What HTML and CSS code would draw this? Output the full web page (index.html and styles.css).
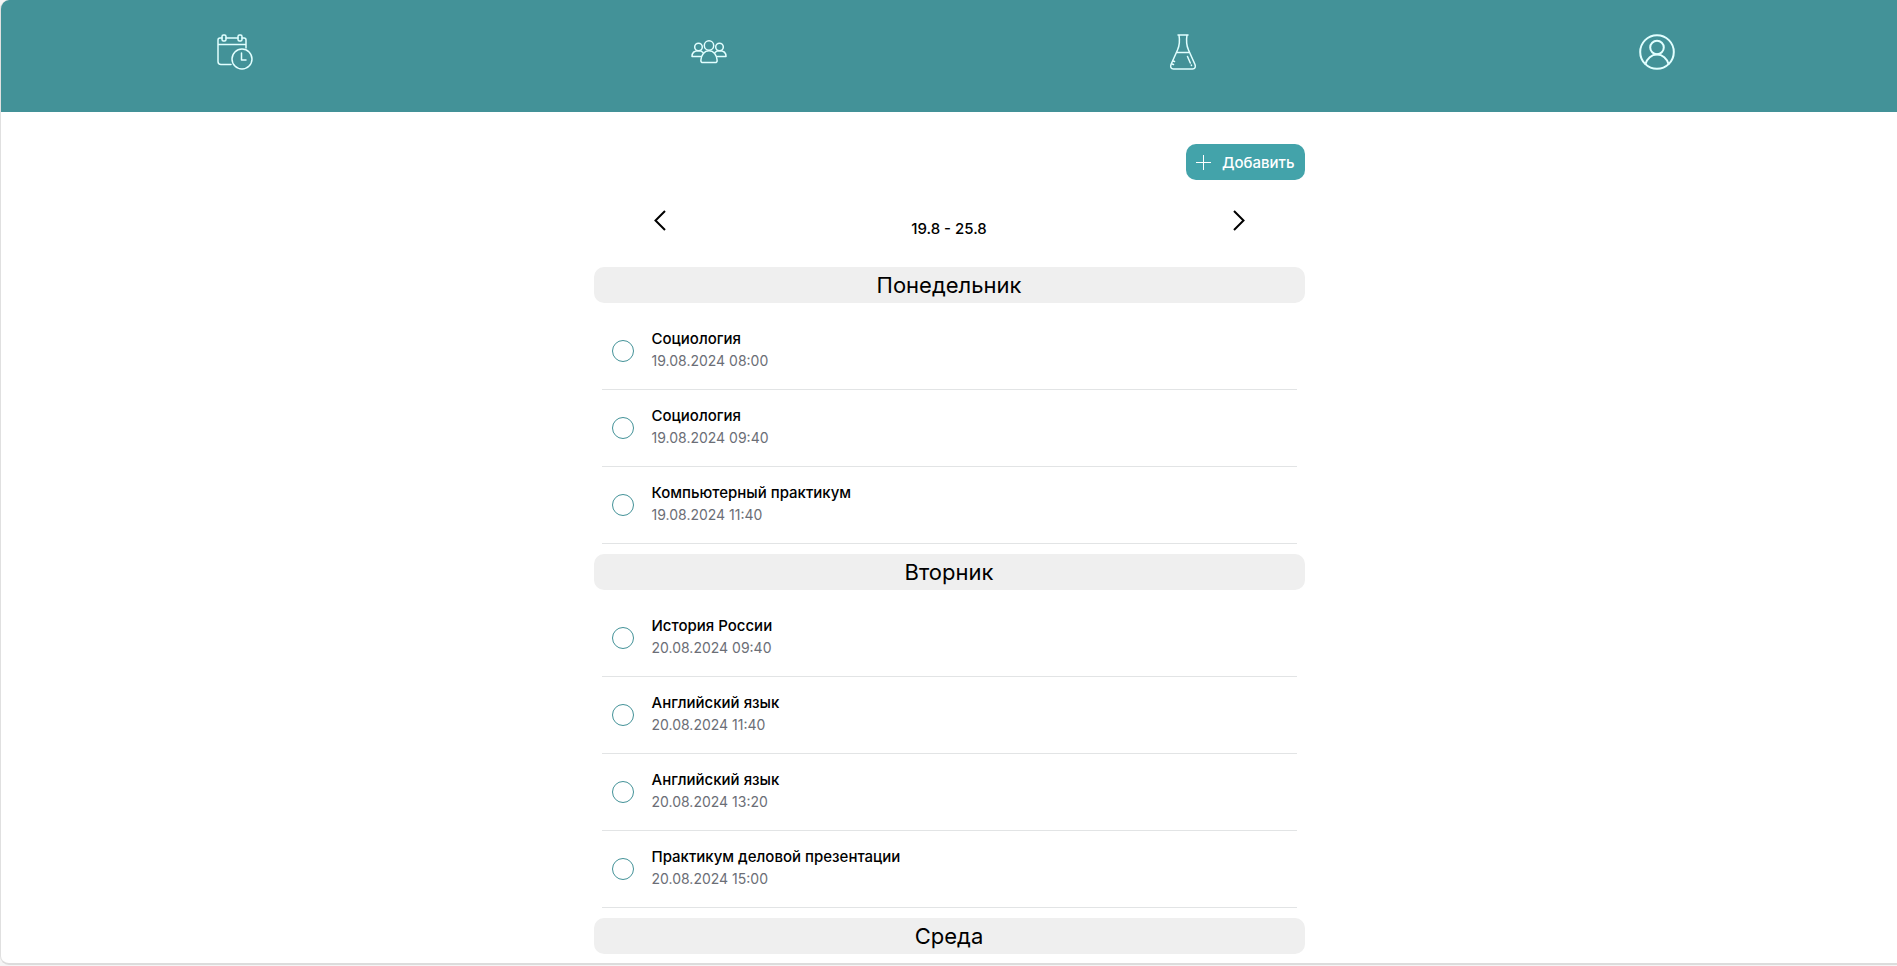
FILE: index.html
```html
<!DOCTYPE html>
<html lang="ru">
<head>
    <meta charset="UTF-8">
    <meta name="viewport" content="width=device-width, initial-scale=1.0">
    <title>Расписание</title>
    <link rel="stylesheet" href="styles.css">
</head>
<body>
    <div class="app">
        <nav class="navbar">
            <a class="nav-link" href="#schedule" aria-label="Расписание">
                <svg class="nav-icon" viewBox="0 0 36 36">
                    <path d="M14 30.500H4a3 3 0 0 1-3-3V6a2 2 0 0 1 2-2h2M9 4h12M25 4h2a2 2 0 0 1 2 2v8M1 10.500h28"/>
                    <rect x="5" y="1" width="4" height="6" rx="1.500"/>
                    <rect x="21" y="1" width="4" height="6" rx="1.500"/>
                    <circle cx="25" cy="25" r="10"/>
                    <path d="M24.500 19v7H29"/>
                </svg>
            </a>
            <a class="nav-link" href="#groups" aria-label="Группы">
                <svg class="nav-icon" viewBox="0 0 36 36">
                    <circle cx="18" cy="11.500" r="4.700"/>
                    <circle cx="7.500" cy="13" r="3.800"/>
                    <circle cx="28.500" cy="13" r="3.800"/>
                    <path d="M12 28.500c-1.500 0-2.300-.8-2.100-2.500.4-5.200 3.400-9.300 8.100-9.300s7.700 4.100 8.100 9.300c.2 1.700-.6 2.500-2.100 2.500z"/>
                    <path d="M9.500 22.500H1c0-3 2-5.700 6.500-5.700 2 0 3.500.6 4.500 1.700M26.500 22.500H35c0-3-2-5.700-6.500-5.700-2 0-3.500.6-4.500 1.700"/>
                </svg>
            </a>
            <a class="nav-link" href="#labs" aria-label="Лабораторные">
                <svg class="nav-icon" viewBox="0 0 36 36">
                    <path d="M13 1h10M14 1c.8 5 .8 10-1.500 15L6 30.500c-1 2.500 0 4.500 2.500 4.500h19c2.500 0 3.500-2 2.500-4.500L23.500 16C21.200 11 21.200 6 22 1M12 18.500h12"/>
                    <path d="M22.500 22.500l2.800 6.500M26.300 31l.2.500M8 27l1.500.5M7 30l1.500.5"/>
                </svg>
            </a>
            <a class="nav-link" href="#profile" aria-label="Профиль">
                <svg class="nav-icon nav-icon-bold" viewBox="0 0 36 36">
                    <circle cx="18" cy="18" r="16.800"/>
                    <circle cx="18" cy="13.500" r="6.800"/>
                    <path d="M6.500 30c1.500-5.500 6-9.500 11.500-9.500S28 24.500 29.500 30"/>
                </svg>
            </a>
        </nav>

        <main class="schedule">
            <div class="toolbar">
                <button class="add-btn" type="button">
                    <svg class="add-icon" viewBox="0 0 15 15"><path d="M7.500 0v15M0 7.500h15"/></svg>
                    Добавить
                </button>
            </div>

            <div class="week">
                <button class="week-btn" type="button" aria-label="Предыдущая неделя">
                    <svg class="week-icon" viewBox="0 0 36 36"><path d="M23 9l-9.500 9.500L23 28"/></svg>
                </button>
                <span class="week-range">19.8 - 25.8</span>
                <button class="week-btn" type="button" aria-label="Следующая неделя">
                    <svg class="week-icon" viewBox="0 0 36 36"><path d="M13 9l9.500 9.500L13 28"/></svg>
                </button>
            </div>

            <h2 class="day">Понедельник</h2>
            <ul class="lessons">
                <li class="lesson">
                    <input class="lesson-check" type="checkbox" id="mon-1">
                    <label class="lesson-text" for="mon-1">
                        <span class="lesson-name">Социология</span>
                        <span class="lesson-date">19.08.2024 08:00</span>
                    </label>
                </li>
                <li class="lesson">
                    <input class="lesson-check" type="checkbox" id="mon-2">
                    <label class="lesson-text" for="mon-2">
                        <span class="lesson-name">Социология</span>
                        <span class="lesson-date">19.08.2024 09:40</span>
                    </label>
                </li>
                <li class="lesson">
                    <input class="lesson-check" type="checkbox" id="mon-3">
                    <label class="lesson-text" for="mon-3">
                        <span class="lesson-name">Компьютерный практикум</span>
                        <span class="lesson-date">19.08.2024 11:40</span>
                    </label>
                </li>
            </ul>

            <h2 class="day">Вторник</h2>
            <ul class="lessons">
                <li class="lesson">
                    <input class="lesson-check" type="checkbox" id="tue-1">
                    <label class="lesson-text" for="tue-1">
                        <span class="lesson-name">История России</span>
                        <span class="lesson-date">20.08.2024 09:40</span>
                    </label>
                </li>
                <li class="lesson">
                    <input class="lesson-check" type="checkbox" id="tue-2">
                    <label class="lesson-text" for="tue-2">
                        <span class="lesson-name">Английский язык</span>
                        <span class="lesson-date">20.08.2024 11:40</span>
                    </label>
                </li>
                <li class="lesson">
                    <input class="lesson-check" type="checkbox" id="tue-3">
                    <label class="lesson-text" for="tue-3">
                        <span class="lesson-name">Английский язык</span>
                        <span class="lesson-date">20.08.2024 13:20</span>
                    </label>
                </li>
                <li class="lesson">
                    <input class="lesson-check" type="checkbox" id="tue-4">
                    <label class="lesson-text" for="tue-4">
                        <span class="lesson-name">Практикум деловой презентации</span>
                        <span class="lesson-date">20.08.2024 15:00</span>
                    </label>
                </li>
            </ul>

            <h2 class="day">Среда</h2>
        </main>
    </div>
</body>
</html>
```

FILE: styles.css
```css
* {
    box-sizing: border-box;
}
body {
    margin: 0;
    background: #f5f5f5;
    font-family: Inter, "Noto Sans", sans-serif;
    font-size: 15px;
    line-height: 22px;
    color: #000;
}
.app {
    background: #fff;
    border-left: 1px solid #e0e0e0;
    border-bottom: 2px solid #dcdcdc;
    border-radius: 9px 0 0 9px;
    overflow: hidden;
}

/* Top navigation */
.navbar {
    display: grid;
    grid-template-columns: repeat(4, 1fr);
    background: #439298;
}
.nav-link {
    display: flex;
    justify-content: center;
    padding: 34px 7px 42px 0;
}
.nav-icon {
    width: 36px;
    height: 36px;
    fill: none;
    stroke: #e2ffff;
    stroke-width: 1.5;
    stroke-linecap: round;
    stroke-linejoin: round;
}
.nav-icon-bold {
    stroke-width: 2;
}

/* Week schedule */
.schedule {
    width: 37.5%;
    min-width: 320px;
    margin: 0 auto;
    padding: 32px 0 9px;
}
.toolbar {
    display: flex;
    justify-content: flex-end;
}
.add-btn {
    display: flex;
    align-items: center;
    gap: 11px;
    height: 36px;
    padding: 0 10px;
    border: 0;
    border-radius: 10px;
    background: #43a3aa;
    color: #fff;
    font-family: inherit;
    font-size: 15px;
    font-weight: 500;
    cursor: pointer;
}
.add-icon {
    width: 15px;
    height: 15px;
    stroke: #fff;
    stroke-width: 1;
}
.week {
    display: flex;
    align-items: flex-end;
    justify-content: space-between;
    margin: 22px 0 29px;
    padding: 0 48px;
}
.week-btn {
    display: flex;
    padding: 0;
    border: 0;
    background: none;
    cursor: pointer;
}
.week-icon {
    width: 36px;
    height: 36px;
    fill: none;
    stroke: #000;
    stroke-width: 2;
}
.week-range {
    font-weight: 500;
    line-height: 18px;
}
.day {
    margin: 0;
    border-radius: 10px;
    background: #efefef;
    font-size: 22px;
    font-weight: 400;
    line-height: 36px;
    text-align: center;
}
.lessons {
    margin: 10px 8px;
    padding: 0;
    list-style: none;
}
.lesson {
    display: flex;
    align-items: center;
    gap: 18px;
    height: 77px;
    padding: 0 10px;
    border-bottom: 1px solid #e2e4e5;
}
.lesson-check {
    appearance: none;
    width: 22px;
    height: 22px;
    margin: 0;
    border: 1px solid #439298;
    border-radius: 50%;
    cursor: pointer;
}
.lesson-check:checked {
    background: #439298;
}
.lesson-text {
    display: flex;
    flex-direction: column;
    padding-bottom: 2px;
}
.lesson-name {
    font-weight: 500;
}
.lesson-date {
    font-size: 14px;
    color: #6b6e76;
}
```
